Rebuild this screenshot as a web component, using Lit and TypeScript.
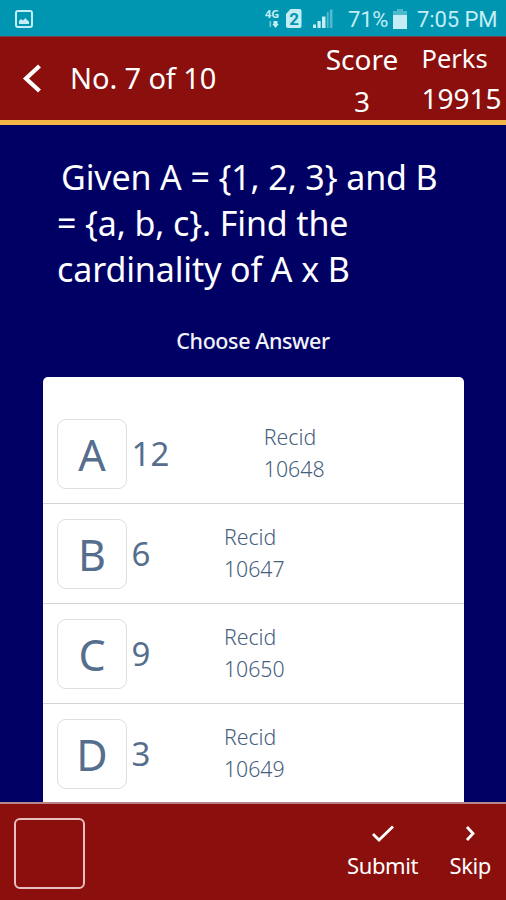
import { LitElement, html, css } from "lit";
import { customElement, property } from "lit/decorators.js";

interface Choice {
  letter: string;
  value: string;
  recid: string;
}

const CHOICES: Choice[] = [
  { letter: "A", value: "12", recid: "10648" },
  { letter: "B", value: "6", recid: "10647" },
  { letter: "C", value: "9", recid: "10650" },
  { letter: "D", value: "3", recid: "10649" },
];

@customElement("status-bar")
class StatusBar extends LitElement {
  static styles = css`
    :host {
      display: flex;
      height: 36px;
      box-sizing: border-box;
      padding: 0 9px 0 14px;
      background: #0096b2;
      color: #c4edf5;
      font: 400 22px/40px Roboto, sans-serif;
    }
    svg { display: block; flex: none; }
    .picture { margin-top: 9px; }
    .network { margin: 8px 0 0 auto; overflow: visible; }
    .percent { margin-left: 13px; width: 41px; letter-spacing: -0.2px; white-space: nowrap; }
    .battery { margin: 9px 0 0 4px; }
    .clock { margin-left: 10px; width: 80px; white-space: nowrap; letter-spacing: -0.1px; }
    .tiny { font: 700 11px "Open Sans", sans-serif; }
    .sim { font: 700 17px Roboto, sans-serif; }
  `;
  render() {
    return html`
      <svg class="picture" width="20" height="20" fill="none">
        <rect x="2" y="2" width="16" height="16" rx="2" stroke="#c4edf5" stroke-width="2" />
        <path d="M5 15v-3l2-2 2 1.500 2.500-2.500 1.500 2 2 1.500V15z" fill="#c4edf5" />
      </svg>
      <svg class="network" width="70" height="22" fill="#c4edf5">
        <text class="tiny" x="0" y="10">4G</text>
        <path d="M4.500 13h1.600v6H4.500z" opacity=".6" />
        <path d="M8.500 13h4v3h1.300L10.500 20 7.300 16h1.200z" />
        <path d="M21 6l4.500-5H34.500a2 2 0 0 1 2 2v15a2 2 0 0 1-2 2H23a2 2 0 0 1-2-2z" />
        <text class="sim" x="24.200" y="17" fill="#0096b2">2</text>
        <path d="M48 16.500h3V20h-3zM52.500 13h3.200v7h-3.200zM57 8.500h3.500V20H57z" />
        <path d="M61.800 4h1.800v16h-1.800zM64.800 1.500H67.500V20h-2.700z" opacity=".42" />
      </svg>
      <span class="percent">71%</span>
      <svg class="battery" width="14" height="20">
        <path d="M4 0h6v2H14v5H0V2h4z" fill="#c4edf5" opacity=".4" />
        <path d="M0 6h14v14H0z" fill="#c4edf5" />
      </svg>
      <span class="clock">7:05 PM</span>
    `;
  }
}

@customElement("quiz-header")
class QuizHeader extends LitElement {
  static styles = css`
    :host {
      display: flex;
      height: 89px;
      box-sizing: border-box;
      border-top: 1px solid #784454;
      border-bottom: 5px solid #f2b546;
      background: #8b0f0d;
      color: #fff;
      font-family: "Noto Sans", sans-serif;
      white-space: nowrap;
    }
    .back { display: block; margin: 27px 0 0 22px; flex: none; }
    .title { margin: 20px 0 0 26px; font-size: 29px; line-height: 42px; letter-spacing: -0.1px; }
    .stat { display: flex; flex-direction: column; }
    .score { margin: 1px 0 0 auto; width: 76px; align-items: center; font-size: 28px; line-height: 42px; }
    .perks { margin: 2px 0 0 21.500px; width: 84.500px; font-size: 28px; line-height: 41px; }
    .label { font-size: 25.500px; line-height: 39px; }
  `;
  render() {
    return html`
      <svg class="back" width="22" height="30" fill="none" stroke="#fff" stroke-width="4.200">
        <path d="M17.500 2L4 14.500 17.500 27" />
      </svg>
      <span class="title">No. 7 of 10</span>
      <div class="stat score"><span>Score</span><span>3</span></div>
      <div class="stat perks"><span class="label">Perks</span><span>19915</span></div>
    `;
  }
}

@customElement("answer-row")
class AnswerRow extends LitElement {
  @property({ attribute: false }) choice!: Choice;
  static styles = css`
    :host {
      display: flex;
      height: 100px;
      box-sizing: border-box;
      padding: 15px 1px 0 14px;
      border-bottom: 1.500px solid #d2d3d6;
      color: #566e8d;
    }
    .tile {
      width: 70px;
      height: 70px;
      box-sizing: border-box;
      border: 1.500px solid #dedede;
      border-radius: 9px;
      text-align: center;
      font-size: 43px;
      line-height: 69px;
    }
    .value { margin-left: 4.500px; font-size: 33px; line-height: 69px; }
    .record { margin: 2px 0 0 94.500px; width: 64px; font-size: 21.300px; line-height: 32px; font-weight: 300; color: #465e7e; }
    .record.narrow { margin-left: 73.500px; }
  `;
  render() {
    const { letter, value, recid } = this.choice;
    return html`
      <div class="tile">${letter}</div>
      <span class="value">${value}</span>
      <div class="record ${value.length === 1 ? "narrow" : ""}">Recid ${recid}</div>
    `;
  }
}

@customElement("quiz-footer")
class QuizFooter extends LitElement {
  static styles = css`
    :host {
      display: flex;
      height: 98px;
      box-sizing: border-box;
      padding: 14px 15px 0 14px;
      border-top: 2px solid #b98489;
      background: #8b0f0d;
      color: #fff;
      font: 400 22px/30px "Noto Sans", sans-serif;
      letter-spacing: -0.400px;
    }
    .slot { width: 71px; height: 71px; box-sizing: border-box; border: 2px solid #eabfbf; border-radius: 6px; }
    .action { display: flex; flex-direction: column; align-items: center; }
    .action svg { display: block; margin-top: 6px; }
    .action span { margin-top: 6px; }
    .submit { margin-left: auto; }
    .skip { margin-left: 31.500px; }
  `;
  render() {
    return html`
      <div class="slot"></div>
      <div class="action submit">
        <svg width="24" height="20" fill="none" stroke="#fff" stroke-width="2.800"><path d="M2 10l6 6L22 2.500" /></svg>
        <span>Submit</span>
      </div>
      <div class="action skip">
        <svg width="12" height="20" fill="none" stroke="#fff" stroke-width="2.800"><path d="M3 3l6 6.500L3 16" /></svg>
        <span>Skip</span>
      </div>
    `;
  }
}

@customElement("app-root")
class AppRoot extends LitElement {
  static styles = css`
    :host {
      display: flex;
      flex-direction: column;
      height: 900px;
      overflow: hidden;
      background: #000064;
      font-family: "Noto Sans", sans-serif;
    }
    status-bar, quiz-header, quiz-footer { flex: none; }
    .content { flex: 1; min-height: 0; overflow: hidden; }
    .question { margin: 29px 50px 0 57px; color: #fff; font-size: 34px; line-height: 46px; text-indent: 4px; letter-spacing: -0.120px; }
    .prompt { margin: 34px 0 0; text-align: center; color: #f2f2fa; font-size: 21.500px; line-height: 30px; font-weight: 500; letter-spacing: -0.400px; }
    .card { margin: 21px 42px 0 43px; padding-top: 27px; height: 460px; background: #fff; border-radius: 5px 5px 0 0; }
  `;
  render() {
    return html`
      <status-bar></status-bar>
      <quiz-header></quiz-header>
      <div class="content">
        <div class="question">Given A = {1, 2, 3} and B<br />= {a, b, c}. Find the<br />cardinality of A x B</div>
        <div class="prompt">Choose Answer</div>
        <div class="card">${CHOICES.map((c) => html`<answer-row .choice=${c}></answer-row>`)}</div>
      </div>
      <quiz-footer></quiz-footer>
    `;
  }
}
